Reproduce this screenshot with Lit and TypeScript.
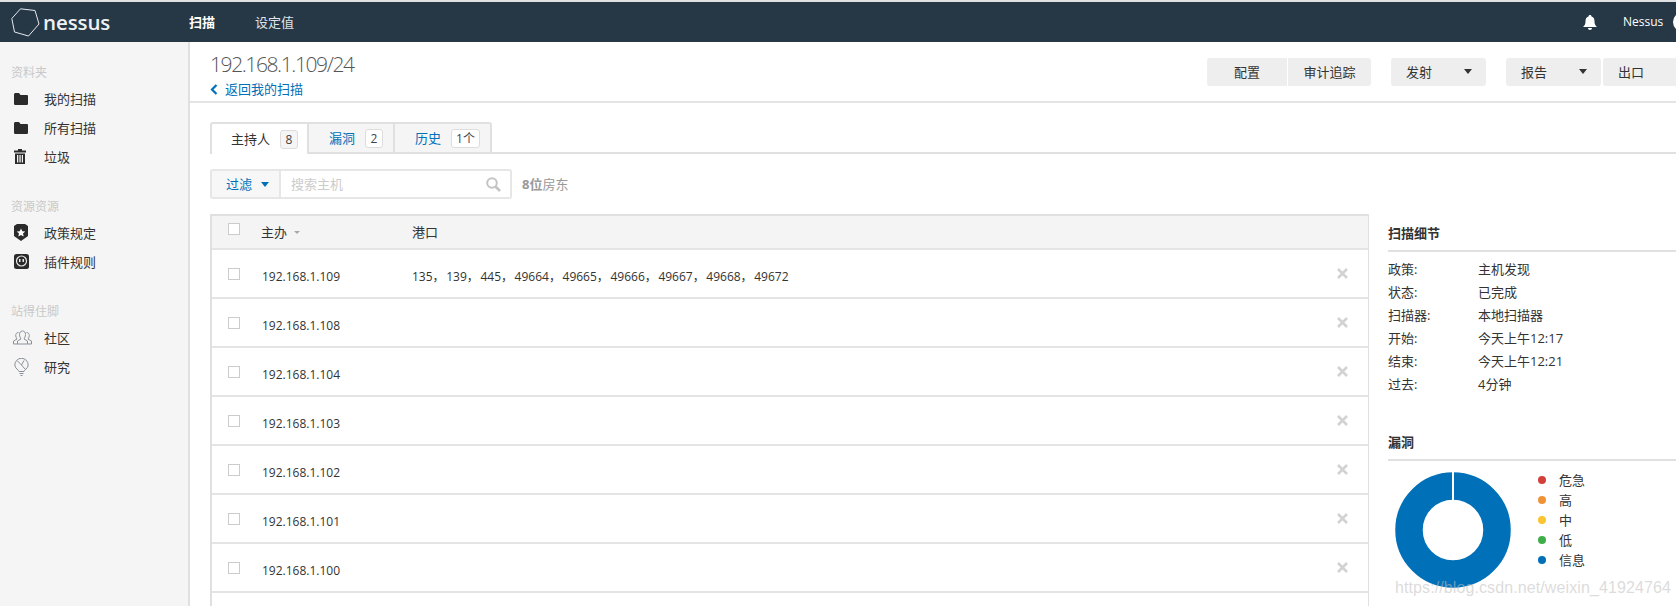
import { LitElement, html, css, svg } from "lit";
import { customElement } from "lit/decorators.js";

const folder = svg`<svg width="14" height="13" viewBox="0 0 14 13"><path fill="#2b2b2b" d="M0 2.500Q0 1 1.200 1H5L6.500 3H13Q14 3 14 4V11.500Q14 13 12.800 13H1.200Q0 13 0 11.500Z"/></svg>`;
const trash = svg`<svg width="12" height="15" viewBox="0 0 12 15"><path fill="#2b2b2b" d="M4 0H8V1.500H12V3.500H0V1.500H4ZM1 4.500H11V15H1ZM3 6V13.500H4.300V6ZM5.400 6V13.500H6.700V6ZM7.800 6V13.500H9V6Z"/></svg>`;
const shield = svg`<svg width="14" height="17" viewBox="0 0 14 17"><path fill="#2b2b2b" d="M3 0H11L14 2V12L7 17L0 12V2Z"/><path fill="#fff" d="M7 4.500L8.300 7.300L11.200 7.600L9 9.500L9.700 12.400L7 10.900L4.300 12.400L5 9.500L2.800 7.600L5.700 7.300Z"/></svg>`;
const plugin = svg`<svg width="15" height="15" viewBox="0 0 15 15"><rect width="15" height="15" rx="2.500" fill="#2b2b2b"/><circle cx="7.500" cy="7" r="5" fill="none" stroke="#e8e8e8" stroke-width="1.200"/><rect x="5" y="5" width="1.500" height="3" fill="#e8e8e8"/><rect x="8.500" y="5" width="1.500" height="3" fill="#e8e8e8"/></svg>`;
const community = svg`<svg width="19" height="15" viewBox="0 0 19 15" fill="none" stroke="#8a9099" stroke-width="1"><path d="M9.500 1C7.500 1 6.500 2.500 6.500 4.500C6.500 6.500 7.500 8 8 9L4.500 11V14H14.500V11L11 9C11.500 8 12.500 6.500 12.500 4.500C12.500 2.500 11.500 1 9.500 1Z"/><path d="M5.500 2.500C3.500 2.500 2.700 4 2.700 5.500C2.700 7 3.500 8 4 9L.5 11V14H4.500"/><path d="M13.500 2.500C15.500 2.500 16.300 4 16.300 5.500C16.300 7 15.500 8 15 9L18.500 11V14H14.500"/></svg>`;
const bulb = svg`<svg width="15" height="18" viewBox="0 0 15 18" fill="none" stroke="#8a9099" stroke-width="1"><path d="M5 13.500C5 12 .8 10.500 .8 7A6.700 6.700 0 0 1 14.200 7C14.200 10.500 10 12 10 13.500Z"/><path d="M3.500 3L7.500 7L11 11M7.500 7L10 2.500"/><path d="M5.500 15.500H9.500M6.500 17.500H8.500"/></svg>`;
const logo = svg`<svg width="29" height="29" viewBox="0 0 29 29" fill="none" stroke="#e6eaed" stroke-width="1"><path d="M9.500 .8L24 2.500L28 16L17.500 28L3.500 24L.8 10.500Z"/></svg>`;
const bell = svg`<svg width="14" height="15" viewBox="0 0 14 15"><path fill="#fff" d="M7 0C8 0 8.500.7 8.500 1.500C10.800 2.200 11.500 4 11.500 6.500C11.500 9.500 12.500 10.500 14 12H0C1.500 10.500 2.500 9.500 2.500 6.500C2.500 4 3.200 2.200 5.500 1.500C5.500.7 6 0 7 0ZM5 13H9C9 14.200 8.200 15 7 15C5.800 15 5 14.200 5 13Z"/></svg>`;
const search = svg`<svg width="15" height="15" viewBox="0 0 15 15" fill="none" stroke="#c4c4c4" stroke-width="2"><circle cx="6" cy="6" r="4.800"/><path stroke-width="2.600" d="M9.500 9.500L14 14"/></svg>`;
const close = svg`<svg width="11" height="11" viewBox="0 0 11 11" stroke="#d2d2d2" stroke-width="2.600"><path d="M1 1L10 10M10 1L1 10"/></svg>`;

const hosts = ["192.168.1.109", "192.168.1.108", "192.168.1.104", "192.168.1.103", "192.168.1.102", "192.168.1.101", "192.168.1.100"];
const details = [["政策:", "主机发现"], ["状态:", "已完成"], ["扫描器:", "本地扫描器"], ["开始:", "今天上午12:17"], ["结束:", "今天上午12:21"], ["过去:", "4分钟"]];
const legend = [["危急", "#d43f3a"], ["高", "#ee9336"], ["中", "#fdc431"], ["低", "#3fae49"], ["信息", "#0071b9"]];

@customElement("app-root")
export class AppRoot extends LitElement {
  static styles = css`
    :host { display: block; width: 1676px; height: 606px; overflow: hidden; background: #fff; color: #333;
      font: 13px/18px "Open Sans", "Noto Sans CJK SC", sans-serif; }
    * { box-sizing: border-box; }
    .page { width: 1800px; height: 606px; display: flex; flex-direction: column; }
    .top { height: 42px; flex: none; border-top: 2px solid #dfe1e2; background: #263746; color: #fff; display: flex; align-items: center; padding-left: 11px; }
    .brand { display: flex; align-items: center; gap: 3px; width: 178px; }
    .brand b { font-size: 20.500px; font-weight: 600; line-height: 28px; color: #eef1f3; letter-spacing: -.1px; }
    .nav { width: 66px; font-size: 13px; }
    .nav.on { font-weight: 700; }
    .nav.two { width: 40px; color: #dfe5ea; }
    .right { margin-left: 1288px; display: flex; align-items: center; flex: none; }
    .right span { margin-left: 26px; font-size: 12px; }
    .avatar { width: 20px; height: 20px; border-radius: 50%; background: #fff; margin-left: 10px; }
    .body { flex: 1; display: flex; min-height: 0; }
    .side { width: 190px; flex: none; background: #f5f5f5; border-right: 2px solid #e0e0e0; padding-top: 22px; }
    .group { height: 18px; padding-left: 11px; font-size: 12px; color: #c9c9c9; margin-bottom: 2px; }
    .item { height: 29px; display: flex; align-items: center; }
    .ico { width: 44px; padding-left: 14px; display: flex; align-items: center; flex: none; }
    .ico.wide { padding-left: 13px; }
    .gap { height: 27px; }
    .main { flex: 1; min-width: 0; display: flex; flex-direction: column; }
    .head { height: 61px; flex: none; border-bottom: 2px solid #e4e4e4; display: flex; padding: 7px 0 0 20px; }
    .title { flex: 1; }
    .title h1 { margin: 0; font-size: 21px; line-height: 30px; font-weight: 300; color: #555; letter-spacing: -1.4px; }
    .back { display: flex; align-items: center; gap: 7px; color: #0071b9; line-height: 20px; }
    .acts { display: flex; padding-top: 9px; height: 37px; width: 593px; flex: none; }
    .btn { height: 28px; background: #eee; display: flex; align-items: center; justify-content: center; border-radius: 3px; position: relative; }
    .btn.l { border-radius: 3px 0 0 3px; width: 80px; margin-right: 1px; }
    .btn.r { border-radius: 0 3px 3px 0; width: 83px; margin-right: 20px; }
    .btn.d { width: 95px; justify-content: flex-start; padding-left: 15px; }
    .btn.d i { position: absolute; right: 14px; top: 11px; }
    .mr { margin-right: 20px; }
    .ml { margin-left: 2px; }
    i.tri { width: 0; height: 0; border: 4.500px solid transparent; border-top: 5px solid #333; border-bottom: 0; display: block; }
    .content { padding: 19px 0 0 20px; flex: 1; min-height: 0; }
    .tabs { display: flex; height: 32px; border-bottom: 2px solid #e0e0e0; width: 1600px; }
    .tab { height: 32px; border: 2px solid #e0e0e0; border-left: 0; background: #f5f5f5; display: flex; align-items: center; padding-left: 20px; color: #0071b9; }
    .tab.on { background: #fff; border-left: 2px solid #e0e0e0; border-bottom: 0; border-radius: 3px 0 0 0; color: #333; width: 99px; padding-left: 19px; }
    .tab:nth-child(2) { width: 86px; }
    .tab:nth-child(3) { width: 97px; border-radius: 0 3px 0 0; }
    .count { margin-left: 10px; height: 19px; min-width: 18px; padding: 0 4px; border: 1px solid #ddd; border-radius: 3px; background: #fff; color: #444; font-size: 12px; line-height: 17px; text-align: center; }
    .tab.on .count { background: #f5f5f5; }
    .filter { display: flex; align-items: center; margin-top: 15px; height: 30px; }
    .fbtn { width: 71px; height: 30px; border: 2px solid #e6e6e6; border-radius: 3px 0 0 3px; background: #f7f7f7; color: #0071b9; display: flex; align-items: center; padding-left: 14px; gap: 9px; }
    .fbtn i { border-top-color: #0071b9; }
    .finput { width: 231px; height: 30px; border: 2px solid #e6e6e6; border-left: 0; border-radius: 0 3px 3px 0; display: flex; align-items: center; justify-content: space-between; color: #ccc; padding: 0 9px 0 10px; }
    .hcount { margin-left: 10px; color: #999; }
    .hcount b { font-weight: 700; }
    .cols { display: flex; margin-top: 15px; align-items: flex-start; }
    .table { width: 1159px; flex: none; border: 2px solid #e0e0e0; border-bottom: 0; border-right-width: 1px; }
    .tr { height: 49px; border-bottom: 2px solid #e4e4e4; display: flex; align-items: center; position: relative; padding-top: 6px; }
    .thead { height: 34px; background: #f4f4f4; padding-top: 0; }
    .cb { width: 12px; height: 12px; border: 1px solid #ccc; background: #fff; margin-left: 16px; flex: none; position: relative; top: -3px; }
    .host { width: 150px; margin-left: 22px; display: flex; align-items: center; flex: none; font-size: 12px; }
    .thead .host { font-size: 13px; margin-left: 21px; width: 151px; }
    .sort { border: 3px solid transparent; border-top: 3px solid #aaa; border-bottom: 0; margin-left: 7px; }
    .ports { font-size: 12px; word-spacing: -1.500px; white-space: pre; }
    .thead .ports { font-size: 13px; }
    .x { position: absolute; right: 20px; top: 18px; display: flex; }
    .panel { margin-left: 19px; width: 300px; flex: none; }
    .ptitle { font-weight: 700; height: 38px; border-bottom: 2px solid #e0e0e0; padding-top: 10px; font-size: 13px; }
    .dl { padding-top: 5px; height: 171px; }
    .dr { display: flex; height: 23px; align-items: center; }
    .dr span:first-child { width: 90px; }
    .chart { display: flex; margin-top: 11px; }
    .chart svg { margin-left: 7px; flex: none; }
    .lg { margin-left: 27px; margin-top: -2px; }
    .lr { height: 20px; display: flex; align-items: center; }
    .dot { width: 8px; height: 8px; border-radius: 50%; margin-right: 13px; }
    .wm { position: absolute; left: 1395px; top: 579px; font: 16px "Liberation Sans", sans-serif; color: rgba(190,190,190,.55); letter-spacing: .1px; white-space: nowrap; }
  `;

  render() {
    return html`<div class="page">
      <div class="top">
        <div class="brand">${logo}<b>nessus</b></div>
        <span class="nav on">扫描</span><span class="nav two">设定值</span>
        <div class="right">${bell}<span>Nessus</span><div class="avatar"></div></div>
      </div>
      <div class="body">
        <aside class="side">
          <div class="group">资料夹</div>
          <div class="item"><span class="ico">${folder}</span>我的扫描</div>
          <div class="item"><span class="ico">${folder}</span>所有扫描</div>
          <div class="item"><span class="ico">${trash}</span>垃圾</div>
          <div class="gap"></div>
          <div class="group">资源资源</div>
          <div class="item"><span class="ico">${shield}</span>政策规定</div>
          <div class="item"><span class="ico">${plugin}</span>插件规则</div>
          <div class="gap"></div>
          <div class="group">站得住脚</div>
          <div class="item"><span class="ico wide">${community}</span>社区</div>
          <div class="item"><span class="ico">${bulb}</span>研究</div>
        </aside>
        <main class="main">
          <div class="head">
            <div class="title">
              <h1>192.168.1.109/24</h1>
              <div class="back"><svg width="8" height="11" viewBox="0 0 8 11" fill="none" stroke="#0071b9" stroke-width="2.200"><path d="M6.500 1L2 5.500L6.500 10"/></svg>返回我的扫描</div>
            </div>
            <div class="acts">
              <div class="btn l">配置</div><div class="btn r">审计追踪</div>
              <div class="btn d mr">发射<i class="tri"></i></div>
              <div class="btn d">报告<i class="tri"></i></div>
              <div class="btn d ml">出口<i class="tri"></i></div>
            </div>
          </div>
          <div class="content">
            <div class="tabs">
              <div class="tab on">主持人<span class="count">8</span></div>
              <div class="tab">漏洞<span class="count">2</span></div>
              <div class="tab">历史<span class="count">1个</span></div>
            </div>
            <div class="filter">
              <div class="fbtn">过滤<i class="tri"></i></div>
              <div class="finput">搜索主机${search}</div>
              <div class="hcount"><b>8位</b>房东</div>
            </div>
            <div class="cols">
              <div class="table">
                <div class="tr thead"><div class="cb"></div><div class="host">主办<i class="sort"></i></div><div class="ports">港口</div></div>
                ${hosts.map((h, i) => html`<div class="tr"><div class="cb"></div><div class="host">${h}</div><div class="ports">${i === 0 ? "135， 139， 445， 49664， 49665， 49666， 49667， 49668， 49672" : ""}</div><span class="x">${close}</span></div>`)}
                <div class="tr"></div>
              </div>
              <div class="panel">
                <div class="ptitle">扫描细节</div>
                <div class="dl">${details.map(([k, v]) => html`<div class="dr"><span>${k}</span><span>${v}</span></div>`)}</div>
                <div class="ptitle">漏洞</div>
                <div class="chart">
                  <svg width="116" height="116" viewBox="0 0 116 116"><circle cx="58" cy="58" r="44" fill="none" stroke="#0071b9" stroke-width="27.500"/><rect x="57" y="0" width="2" height="30" fill="#fff"/></svg>
                  <div class="lg">${legend.map(([n, c]) => html`<div class="lr"><span class="dot" style="background:${c}"></span>${n}</div>`)}</div>
                </div>
              </div>
            </div>
          </div>
        </main>
      </div>
      <div class="wm">https://blog.csdn.net/weixin_41924764</div>
    </div>`;
  }
}
